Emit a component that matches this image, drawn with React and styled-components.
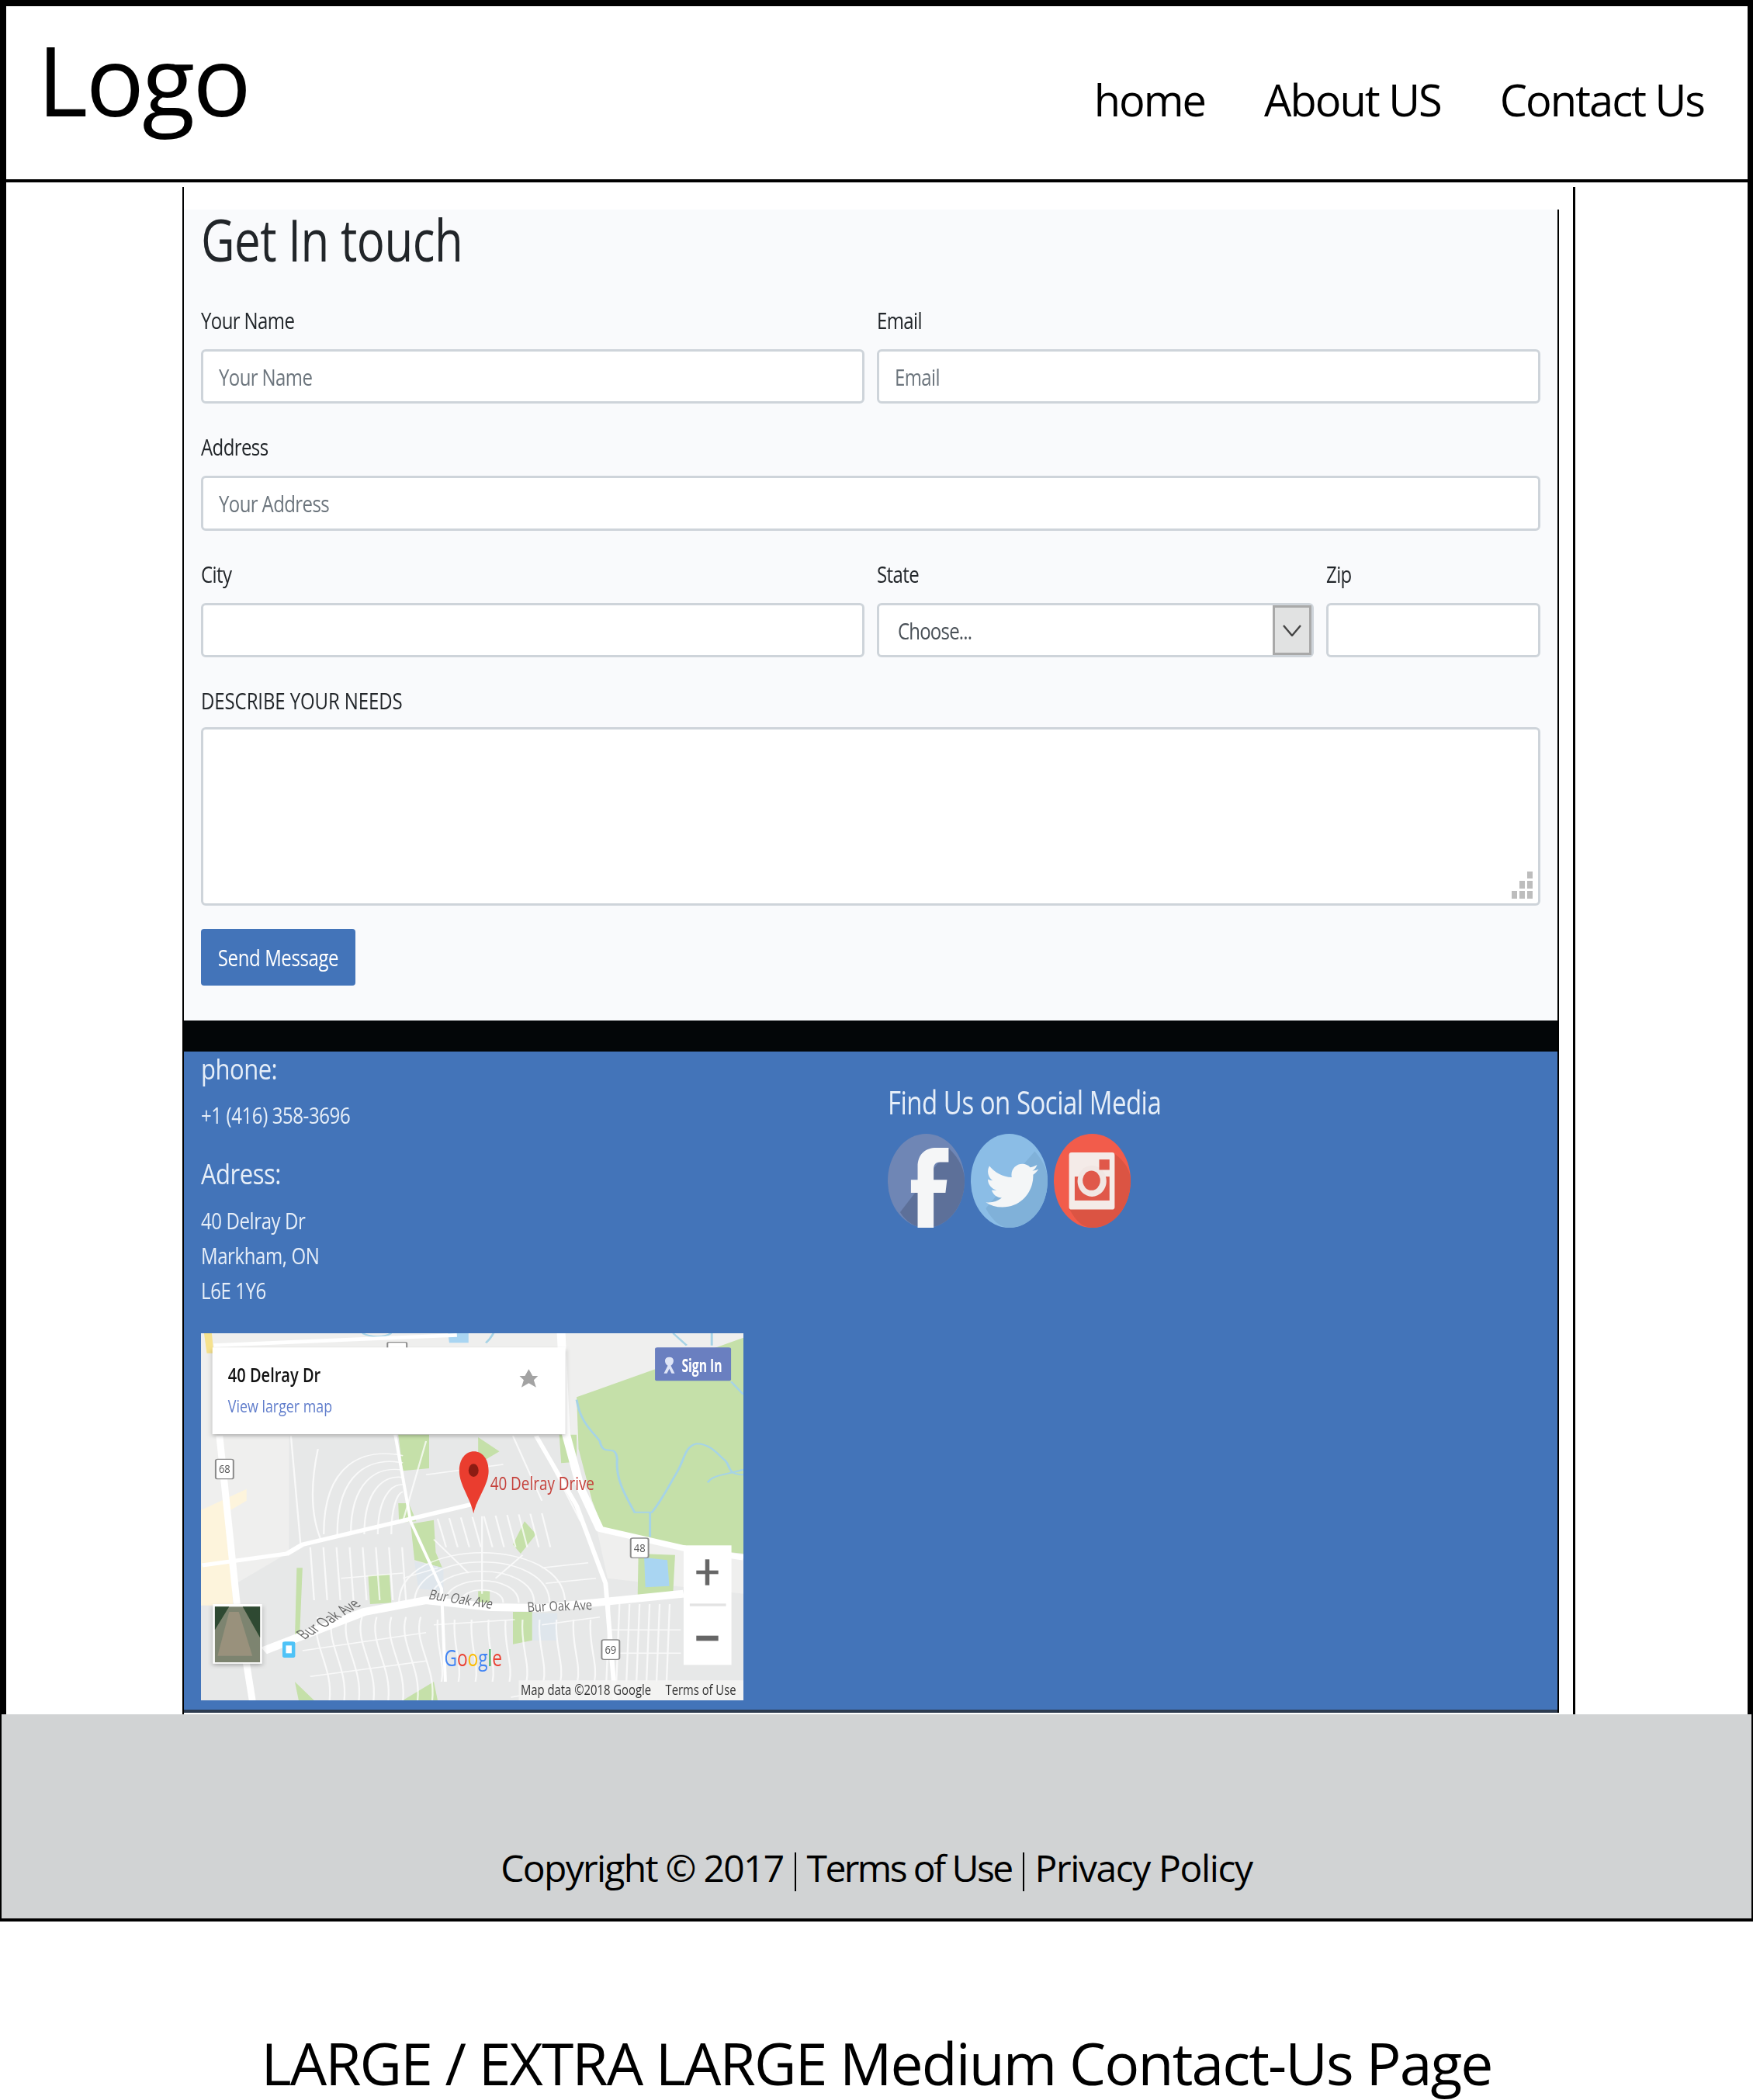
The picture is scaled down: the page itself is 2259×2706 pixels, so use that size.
import React from "react";
import styled, { createGlobalStyle, css } from "styled-components";

const GlobalStyle = createGlobalStyle`
  html, body {
    margin: 0;
    padding: 0;
    background: #fff;
    font-family: "Open Sans", "Liberation Sans", sans-serif;
  }
  * { box-sizing: border-box; }
`;

// the whole reference is stretched vertically, the text has to follow
const tall = css`
  display: inline-block;
  transform: scaleY(${(p) => p.$sy || 1.2});
  transform-origin: left center;
  white-space: nowrap;
`;

const Page = styled.div`
  width: 2259px;
  height: 2706px;
  overflow: hidden;
`;

const Frame = styled.div`
  border: solid #000;
  border-width: 8px 7px 0 8px;
  height: 2209px;
`;

const Header = styled.header`
  height: 227px;
  border-bottom: 4px solid #000;
  display: flex;
  align-items: baseline;
  justify-content: space-between;
  padding: 11px 56px 0 40px;
`;

const Logo = styled.div`
  font-size: 125px;
  line-height: 165px;
  letter-spacing: -2.6px;
  color: #000;
`;

const Nav = styled.nav`
  display: flex;
  gap: 76px;
`;

const NavLink = styled.a`
  font-size: 56px;
  line-height: 80px;
  letter-spacing: -2px;
  color: #000;
`;

const Container = styled.main`
  width: 1795px;
  height: 1968px;
  margin: 6px 0 0 227px;
  padding: 29px 18px 0 0;
  border: solid #000;
  border-width: 0 3px 0 2px;
`;

const Panel = styled.div`
  border-right: 2px solid #000;
`;

const Form = styled.form`
  height: 1045px;
  background: #f9fafc;
  padding: 0 22px;
`;

const Title = styled.h1`
  ${tall}
  margin: 0;
  height: 128px;
  line-height: 86px;
  font-size: 60px;
  font-weight: 400;
  letter-spacing: -0.5px;
  color: #212529;
`;

const Fields = styled.div`
  display: flex;
  flex-direction: column;
  gap: 41px;
`;

const Row = styled.div`
  display: grid;
  grid-template-columns: ${(p) => p.$cols};
  column-gap: 16px;
`;

const Field = styled.div`
  min-width: 0;
`;

const Label = styled.label`
  ${tall}
  display: block;
  height: 30px;
  margin-bottom: 22px;
  font-size: 24px;
  line-height: 30px;
  letter-spacing: ${(p) => p.$ls ?? -0.6}px;
  color: #212529;
`;

const control = css`
  background: #fff;
  border: 3px solid #ced4da;
  border-radius: 6px;
`;

const TextBox = styled.div`
  ${control}
  height: ${(p) => p.$h || 70}px;
  display: flex;
  align-items: center;
  padding: 0 20px;
`;

const Placeholder = styled.span`
  ${tall}
  font-size: 24px;
  letter-spacing: -0.6px;
  color: #6c757d;
`;

const SelectBox = styled.div`
  ${control}
  height: 70px;
  display: flex;
  align-items: stretch;
  justify-content: space-between;
  padding-left: 24px;
`;

const SelectValue = styled.span`
  ${tall}
  align-self: center;
  font-size: 24px;
  letter-spacing: -0.8px;
  color: #495057;
`;

const SelectArrow = styled.div`
  width: 50px;
  background: #e1e2e2;
  border: 3px solid #a9a9a9;
  display: flex;
  align-items: center;
  justify-content: center;
`;

const TextAreaWrap = styled.div`
  position: relative;
  height: 230px;
  margin-top: -3px;
`;

const TextArea = styled.textarea`
  ${control}
  display: block;
  width: 100%;
  height: 100%;
  resize: none;
  outline: none;
`;

const Grip = styled.svg`
  position: absolute;
  right: 10px;
  bottom: 9px;
`;

const SendButton = styled.button`
  display: block;
  width: 199px;
  height: 73px;
  margin-top: 30px;
  padding: 0;
  border: 0;
  border-radius: 4px;
  background: #4374b9;
  color: #fff;
  font-family: inherit;
  font-size: 24px;
  letter-spacing: -0.4px;
`;

const ButtonText = styled.span`
  ${tall}
  transform-origin: center;
`;

const BlackBar = styled.div`
  height: 40px;
  background: #030608;
`;

const Contact = styled.section`
  height: 852px;
  background: #4374b9;
  border-bottom: 4px solid #2d3b4f;
  padding: 0 22px;
  display: grid;
  grid-template-columns: 885px 1fr;
`;

const InfoColumn = styled.div`
  display: flex;
  flex-direction: column;
`;

const InfoHeading = styled.h4`
  ${tall}
  margin: ${(p) => p.$top}px 0 0;
  font-size: 31px;
  font-weight: 400;
  line-height: 44px;
  letter-spacing: -0.5px;
  color: #e6eef8;
`;

const InfoLine = styled.div`
  ${tall}
  margin-top: ${(p) => p.$top || 0}px;
  font-size: 24px;
  line-height: 45px;
  letter-spacing: -0.4px;
  color: #e6eef8;
`;

const AddressBlock = styled.div`
  margin-top: 16px;
  display: flex;
  flex-direction: column;
`;

const MapBox = styled.div`
  width: 699px;
  height: 473px;
  margin-top: 33px;
  overflow: hidden;
  filter: blur(0.7px);
`;

const SocialColumn = styled.div`
  padding-top: 46px;
`;

const SocialTitle = styled.h4`
  ${tall}
  margin: 0;
  font-size: 33px;
  font-weight: 400;
  line-height: 40px;
  letter-spacing: -0.5px;
  color: #e6eef8;
`;

const SocialRow = styled.div`
  display: flex;
  gap: 8px;
  margin-top: 20px;
`;

const Footer = styled.footer`
  height: 267px;
  background: #d1d3d4;
  border: solid #000;
  border-width: 0 2px 4px 2px;
  display: flex;
  justify-content: center;
  align-items: flex-end;
  padding-bottom: 30px;
  font-size: 48px;
  line-height: 70px;
  color: #000;
`;

const FooterPart = styled.span`
  letter-spacing: ${(p) => p.$ls}px;
`;

const FooterSep = styled.span`
  display: inline-block;
  width: 2px;
  height: 50px;
  margin: 0 14px;
  background: #000;
  vertical-align: -12px;
`;

const Caption = styled.div`
  margin-top: 132px;
  text-align: center;
  font-size: 75px;
  line-height: 100px;
  letter-spacing: -1.9px;
  color: #000;
`;

// map drawing, coordinates in a 1405x1419 space squeezed to 699x473
const ROAD_LABEL = { fontFamily: "Open Sans, sans-serif", fill: "#666", fontSize: 52 };

const range = (from, to, step) => {
  const out = [];
  for (let v = from; v <= to; v += step) out.push(v);
  return out;
};

function Shield({ x, y, text }) {
  return (
    <g>
      <rect x={x} y={y} width="46" height="76" rx="6" fill="#fff" stroke="#8a8a8a" strokeWidth="4" />
      <text x={x + 8} y={y + 54} fontSize="46" fill="#555" textLength="30" lengthAdjust="spacingAndGlyphs" fontFamily="Open Sans, sans-serif">
        {text}
      </text>
    </g>
  );
}

function MapDrawing() {
  return (
    <svg width="699" height="473" viewBox="117 53 1405 1419" preserveAspectRatio="none">
      <defs>
        <filter id="soft"><feGaussianBlur stdDeviation="1.6" /></filter>
        <filter id="shade" x="-10%" y="-10%" width="120%" height="130%">
          <feDropShadow dx="0" dy="8" stdDeviation="7" floodColor="#000" floodOpacity="0.25" />
        </filter>
      </defs>
      <rect x="117" y="53" width="1405" height="1419" fill="#efefee" />
      <path d="M345 450H1090L1170 1000L1522 1060V1472H117V1100L345 900Z" fill="#e7e8e8" />

      <g filter="url(#soft)">
        <path d="M120 735L235 655V700L190 740L200 1105H117V735Z" fill="#fdf4dc" />
        <path d="M125 53H145L150 130H132Z" fill="#f6e28e" />
        <path d="M1090 300L1522 70V905L1370 880L1160 815L1130 700L1095 500Z" fill="#c5e0a9" />
        <path d="M628 445H708L708 575L640 585Z" fill="#c5e0a9" />
        <path d="M835 455L890 510L850 545L835 520Z" fill="#c5e0a9" />
        <path d="M660 790L720 775L725 900L742 960L670 930Z" fill="#c5e0a9" />
        <path d="M550 990L605 985L610 1095L555 1100Z" fill="#c5e0a9" />
        <path d="M955 780L985 830L945 905L925 870Z" fill="#c5e0a9" />
        <path d="M925 1130H975V1240L925 1255Z" fill="#c5e0a9" />
        <path d="M1250 905L1345 910L1340 1050L1248 1070Z" fill="#c5e0a9" />
        <path d="M1045 445H1090L1090 550L1050 555Z" fill="#c5e0a9" />
        <path d="M360 1400L410 1472H370Z" fill="#c5e0a9" />
        <path d="M720 1400L640 1472H730Z" fill="#c5e0a9" />
        <path d="M365 960H380L372 1240H360Z" fill="#c5e0a9" />
        <path d="M835 1050H865V1095H835Z" fill="#c5e0a9" />
        <path d="M628 710L655 710L675 780L630 785Z" fill="#c5e0a9" />
        <path d="M1265 920L1325 930L1330 1030L1268 1035Z" fill="#a9d5f2" />
        <path d="M757 53H810V90H760Z" fill="#a9d5f2" />
        <path d="M670 935L745 960V1050L680 1040Z" fill="#dfe6ec" />
        <path d="M975 1135H1040V1240H975Z" fill="#dfe6ec" />

        <g fill="none" stroke="#a6d3e6" strokeWidth="6">
          <path d="M1090 310C1100 400 1130 430 1150 470C1160 540 1190 470 1195 540C1190 620 1220 690 1240 745H1285C1310 700 1330 640 1350 590C1370 540 1370 490 1400 480C1440 480 1460 530 1475 545C1490 570 1480 600 1522 600" />
          <path d="M1280 745V840" />
          <path d="M1430 630C1440 600 1480 600 1522 580" />
          <path d="M1490 240L1522 290M1340 53L1375 100M1440 53V100" />
          <path d="M855 90C870 70 870 60 875 53M535 53C560 70 590 70 610 53" />
        </g>

        <g fill="none" stroke="#fff" strokeWidth="4.5" opacity="0.75">
          {range(730, 1010, 30).map((x) => (
            <path key={x} d={`M${x} ${770 - (x - 730) * 0.08}L${x + 22} 880`} />
          ))}
          {range(400, 640, 34).map((x) => (
            <path key={x} d={`M${x} 880L${x + 10} 1085`} />
          ))}
          {range(1175, 1350, 26).map((x) => (
            <path key={x} d={`M${x} 1100L${x - 8} 1400`} />
          ))}
          {range(420, 690, 38).map((x) => (
            <path key={x} d={`M${x} 1150C${x - 20} 1250 ${x + 40} 1340 ${x + 30} 1472`} />
          ))}
          {range(730, 1150, 44).map((x) => (
            <path key={x} d={`M${x} 1160C${x - 6} 1260 ${x + 20} 1330 ${x + 10} 1400`} />
          ))}
          {[55, 95, 135, 175, 215].map((r) => (
            <path key={r} d={`M${845 - r} 1095C${845 - r} ${1095 - r * 1.2} ${845 + r} ${1095 - r * 1.2} ${845 + r} 1095`} />
          ))}
          {[30, 65, 100, 135, 170, 205].map((r) => (
            <path key={r} d={`M${640 - r} 830C${640 - r} ${760 - r} ${640 - r / 2} ${700 - r} 640 ${690 - r * 0.8}`} />
          ))}
          <path d="M420 500C400 640 400 760 430 860M350 450L375 870M700 470L640 780" />
          <path d="M845 760V1060M950 910L880 1000M720 850L810 980M925 450L1000 700" />
          <path d="M1170 1200H1360M1170 1290H1360M1000 1180L1150 1150M380 1280L700 1210M400 1380L700 1320" />
          <path d="M1150 1400L920 1460M720 1180L930 1160M990 460L1100 780" />
          <path d="M480 1000L640 980M730 960L640 1000M1000 960L1120 940M1010 1020L1140 1000M700 600L900 560" />
        </g>

        <g fill="none" stroke="#fff" strokeLinejoin="round">
          <path d="M280 1280L540 1130L700 1085L870 1112L1000 1115L1367 1060" strokeWidth="30" />
          <path d="M120 950L340 905L380 870L830 710" strokeWidth="16" />
          <path d="M165 450L210 1100L250 1472" strokeWidth="18" />
          <path d="M1050 53L1062 440L1100 650L1150 810L1370 885L1522 920" strokeWidth="22" />
          <path d="M985 450L1090 720L1165 1020L1190 1472" strokeWidth="12" />
          <path d="M620 445L660 780L740 1040L750 1400" strokeWidth="8" />
          <path d="M150 100L780 60" strokeWidth="14" />
        </g>
      </g>

      <Shield x={155} y={540} text="68" />
      <Shield x={1230} y={845} text="48" />
      <Shield x={1155} y={1238} text="69" />
      <rect x="600" y="88" width="50" height="30" rx="5" fill="#fff" stroke="#8a8a8a" strokeWidth="4" />

      <rect x="147" y="108" width="913" height="335" fill="#fff" filter="url(#shade)" />
      <text x="187" y="243" fontFamily="Open Sans, sans-serif" fontWeight="600" fontSize="78" fill="#111" textLength="240" lengthAdjust="spacingAndGlyphs">40 Delray Dr</text>
      <text x="187" y="360" fontFamily="Open Sans, sans-serif" fontSize="66" fill="#5f7ccb" textLength="270" lengthAdjust="spacingAndGlyphs">View larger map</text>
      <path d="M966 192L976 218H990L979 234L985 262L966 246L947 262L953 234L942 218H956Z" fill="#a3a3a3" />

      <rect x="1293" y="108" width="197" height="129" rx="6" fill="#6a7fc0" />
      <path d="M1330 145C1345 145 1343 170 1334 178L1344 208H1336L1330 190L1324 208H1316L1326 178C1317 170 1315 145 1330 145Z" fill="#dfe5f6" />
      <text x="1362" y="203" fontFamily="Open Sans, sans-serif" fontWeight="700" fontSize="68" fill="#fff" textLength="105" lengthAdjust="spacingAndGlyphs">Sign In</text>

      <path d="M823 750C815 690 786 640 786 585C786 540 802 510 824 510C846 510 862 540 862 585C862 640 832 690 823 750Z" fill="#ea3d2f" />
      <ellipse cx="823" cy="583" rx="13" ry="25" fill="#8c1c13" />
      <text x="866" y="660" fontFamily="Open Sans, sans-serif" fontSize="70" fill="#c5403a" textLength="270" lengthAdjust="spacingAndGlyphs">40 Delray Drive</text>

      <text transform="rotate(13 705 1080)" x="705" y="1080" {...ROAD_LABEL} textLength="168" lengthAdjust="spacingAndGlyphs">Bur Oak Ave</text>
      <text transform="rotate(-3 963 1130)" x="963" y="1130" {...ROAD_LABEL} textLength="168" lengthAdjust="spacingAndGlyphs">Bur Oak Ave</text>
      <text transform="rotate(-42 385 1238)" x="385" y="1238" {...ROAD_LABEL} textLength="200" lengthAdjust="spacingAndGlyphs">Bur Oak Ave</text>

      <rect x="1367" y="873" width="124" height="462" fill="#fff" />
      <rect x="1400" y="970" width="57" height="14" fill="#666" />
      <rect x="1423" y="927" width="11" height="100" fill="#666" />
      <rect x="1383" y="1098" width="94" height="10" fill="#e3e3e3" />
      <rect x="1400" y="1222" width="57" height="20" fill="#666" />

      <rect x="148" y="1100" width="127" height="230" fill="#fff" filter="url(#shade)" />
      <rect x="153" y="1110" width="117" height="215" fill="#7d8470" />
      <g filter="url(#soft)">
        <path d="M153 1110H190L153 1200ZM225 1110H270V1230Z" fill="#2e4a30" />
        <path d="M190 1130L215 1130L250 1300H160Z" fill="#99917c" />
      </g>
      <rect x="328" y="1245" width="33" height="62" rx="7" fill="#4fc3f7" />
      <rect x="337" y="1260" width="15" height="30" fill="#fff" />

      <text x="747" y="1340" fontFamily="Open Sans, sans-serif" fontSize="88" textLength="150" lengthAdjust="spacingAndGlyphs">
        <tspan fill="#4285f4">G</tspan><tspan fill="#ea4335">o</tspan><tspan fill="#fbbc05">o</tspan><tspan fill="#4285f4">g</tspan><tspan fill="#34a853">l</tspan><tspan fill="#ea4335">e</tspan>
      </text>

      <rect x="940" y="1395" width="582" height="77" fill="#f4f4f3" opacity="0.85" />
      <text x="945" y="1452" fontFamily="Open Sans, sans-serif" fontSize="54" fill="#333" textLength="338" lengthAdjust="spacingAndGlyphs">Map data ©2018 Google</text>
      <text x="1320" y="1452" fontFamily="Open Sans, sans-serif" fontSize="54" fill="#333" textLength="183" lengthAdjust="spacingAndGlyphs">Terms of Use</text>
    </svg>
  );
}

function FacebookIcon() {
  return (
    <svg width="99" height="121" viewBox="132 243 298 362" preserveAspectRatio="none">
      <ellipse cx="281" cy="424" rx="149" ry="181" fill="#6f86b5" />
      <path d="M180 545L370 300C410 340 430 380 430 424C430 524 363 605 281 605C240 605 205 585 180 545Z" fill="#5d7099" />
      <path d="M248 605V470H222V420H248V370C248 320 280 297 320 297H368V352H335C318 352 310 362 310 378V420H362L356 470H310V605Z" fill="#f5f6f7" />
    </svg>
  );
}

function TwitterIcon() {
  return (
    <svg width="99" height="121" viewBox="452 243 298 362" preserveAspectRatio="none">
      <ellipse cx="601" cy="424" rx="149" ry="181" fill="#8bbde6" />
      <path d="M510 530L700 310C735 350 750 385 750 424C750 524 683 605 601 605C565 605 535 575 510 530Z" fill="#80b1d9" />
      <svg x="510" y="340" width="205" height="205" viewBox="0 0 512 512" preserveAspectRatio="none">
        <path
          fill="#f4f6f7"
          d="M459.37 151.716c.325 4.548.325 9.097.325 13.645 0 138.72-105.583 298.558-298.558 298.558-59.452 0-114.68-17.219-161.137-47.106 8.447.974 16.568 1.299 25.34 1.299 49.055 0 94.213-16.568 130.274-44.832-46.132-.975-84.792-31.188-98.112-72.772 6.498.974 12.995 1.624 19.818 1.624 9.421 0 18.843-1.3 27.614-3.573-48.081-9.747-84.143-51.98-84.143-102.985v-1.299c13.969 7.797 30.214 12.67 47.431 13.319-28.264-18.843-46.781-51.005-46.781-87.391 0-19.492 5.197-37.36 14.294-52.954 51.655 63.675 129.3 105.258 216.365 109.807-1.624-7.797-2.599-15.918-2.599-24.04 0-57.828 46.782-104.934 104.934-104.934 30.213 0 57.502 12.67 76.67 33.137 23.715-4.548 46.456-13.32 66.599-25.34-7.798 24.366-24.366 44.833-46.132 57.827 21.117-2.273 41.584-8.122 60.426-16.243-14.292 20.791-32.161 39.308-52.628 54.253z"
        />
      </svg>
    </svg>
  );
}

function InstagramIcon() {
  return (
    <svg width="99" height="121" viewBox="774 243 298 362" preserveAspectRatio="none">
      <ellipse cx="923" cy="424" rx="149" ry="181" fill="#f25c4b" />
      <path d="M835 535L1010 320C1050 350 1072 385 1072 424C1072 524 1005 605 923 605C885 605 860 580 835 535Z" fill="#db5443" />
      <rect x="833" y="315" width="177" height="220" rx="10" fill="#f4ebe8" />
      <rect x="855" y="408" width="135" height="92" fill="#e0584a" />
      <ellipse cx="922" cy="425" rx="56" ry="60" fill="#f1e6e3" />
      <ellipse cx="920" cy="423" rx="34" ry="38" fill="#e0584a" />
      <rect x="950" y="342" width="40" height="40" fill="#e0584a" />
    </svg>
  );
}

export default function App() {
  return (
    <Page>
      <GlobalStyle />
      <Frame>
        <Header>
          <Logo>Logo</Logo>
          <Nav>
            <NavLink>home</NavLink>
            <NavLink>About US</NavLink>
            <NavLink>Contact Us</NavLink>
          </Nav>
        </Header>
        <Container>
          <Panel>
            <Form>
              <Title $sy={1.25}>Get In touch</Title>
              <Fields>
                <Row $cols="855px 855px">
                  <Field>
                    <Label>Your Name</Label>
                    <TextBox><Placeholder>Your Name</Placeholder></TextBox>
                  </Field>
                  <Field>
                    <Label>Email</Label>
                    <TextBox><Placeholder>Email</Placeholder></TextBox>
                  </Field>
                </Row>
                <Row $cols="1726px">
                  <Field>
                    <Label>Address</Label>
                    <TextBox $h={71}><Placeholder>Your Address</Placeholder></TextBox>
                  </Field>
                </Row>
                <Row $cols="855px 563px 276px">
                  <Field>
                    <Label>City</Label>
                    <TextBox />
                  </Field>
                  <Field>
                    <Label>State</Label>
                    <SelectBox>
                      <SelectValue>Choose...</SelectValue>
                      <SelectArrow>
                        <svg width="24" height="15" viewBox="0 0 24 15">
                          <path d="M1 1L12 14L23 1" fill="none" stroke="#444" strokeWidth="2.4" />
                        </svg>
                      </SelectArrow>
                    </SelectBox>
                  </Field>
                  <Field>
                    <Label>Zip</Label>
                    <TextBox />
                  </Field>
                </Row>
                <Row $cols="1726px">
                  <Field>
                    <Label $ls={-0.1}>DESCRIBE YOUR NEEDS</Label>
                    <TextAreaWrap>
                      <TextArea />
                      <Grip width="27" height="35" viewBox="0 0 27 35">
                        <path d="M20 0h7v9h-7zM10 12h7v10h-7zM20 12h7v10h-7zM0 25h7v10H0zM10 25h7v10h-7zM20 25h7v10h-7z" fill="#bdbdbd" />
                      </Grip>
                    </TextAreaWrap>
                  </Field>
                </Row>
              </Fields>
              <SendButton type="button"><ButtonText>Send Message</ButtonText></SendButton>
            </Form>
            <BlackBar />
            <Contact>
              <InfoColumn>
                <InfoHeading $top={0}>phone:</InfoHeading>
                <InfoLine $top={15}>+1 (416) 358-3696</InfoLine>
                <InfoHeading $top={31}>Adress:</InfoHeading>
                <AddressBlock>
                  <InfoLine>40 Delray Dr</InfoLine>
                  <InfoLine>Markham, ON</InfoLine>
                  <InfoLine>L6E 1Y6</InfoLine>
                </AddressBlock>
                <MapBox><MapDrawing /></MapBox>
              </InfoColumn>
              <SocialColumn>
                <SocialTitle $sy={1.25}>Find Us on Social Media</SocialTitle>
                <SocialRow>
                  <FacebookIcon />
                  <TwitterIcon />
                  <InstagramIcon />
                </SocialRow>
              </SocialColumn>
            </Contact>
          </Panel>
        </Container>
      </Frame>
      <Footer>
        <span>
          <FooterPart $ls={-1.7}>Copyright © 2017</FooterPart>
          <FooterSep />
          <FooterPart $ls={-2.6}>Terms of Use</FooterPart>
          <FooterSep />
          <FooterPart $ls={-1.4}>Privacy Policy</FooterPart>
        </span>
      </Footer>
      <Caption>LARGE / EXTRA LARGE Medium Contact-Us Page</Caption>
    </Page>
  );
}
